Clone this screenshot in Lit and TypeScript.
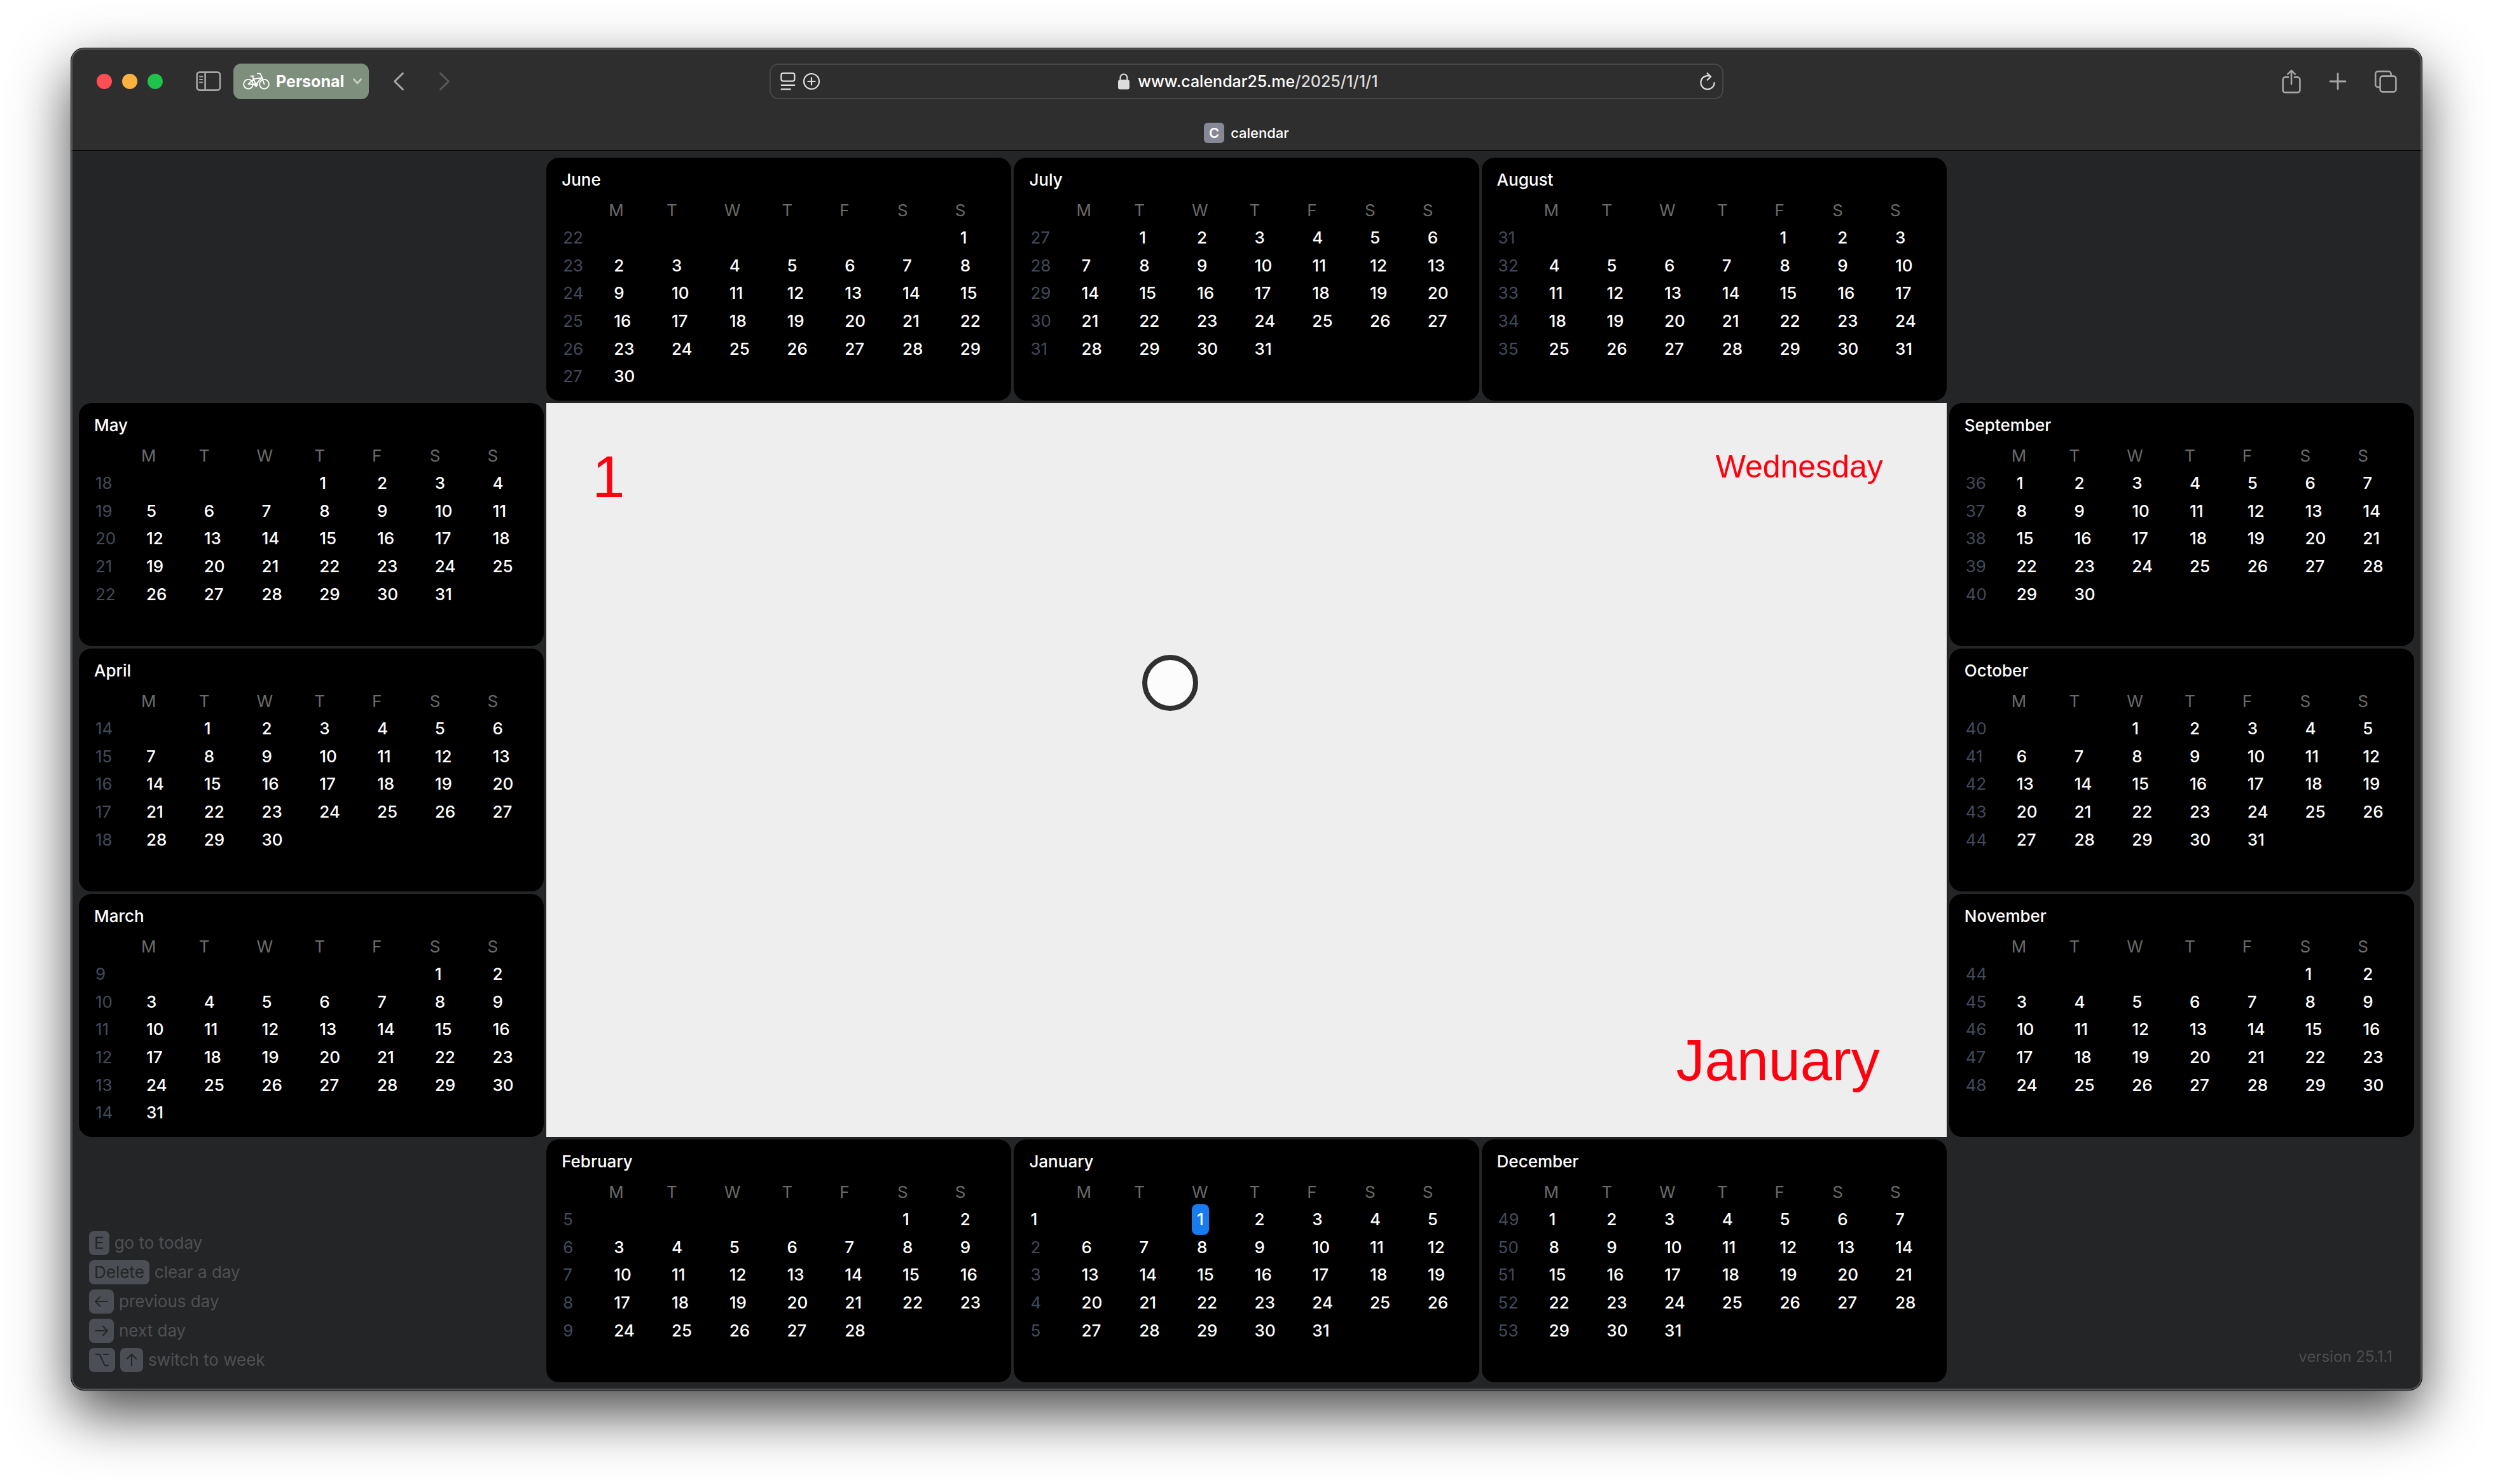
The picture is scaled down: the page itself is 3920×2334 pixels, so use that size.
import { LitElement, html, css, svg, nothing } from "lit";
import { customElement, property } from "lit/decorators.js";
import { classMap } from "lit/directives/class-map.js";

const YEAR = 2025;
const MONTHS = [
  "January", "February", "March", "April", "May", "June",
  "July", "August", "September", "October", "November", "December",
];
const WEEKDAYS = ["Monday", "Tuesday", "Wednesday", "Thursday", "Friday", "Saturday", "Sunday"];
const DAY_MS = 86400000;

interface Week {
  number: number;
  days: (number | null)[];
}

/** Monday-first weeks of a month; week numbers count on from 1 through the year. */
function weeksOf(month: number): Week[] {
  const first = new Date(Date.UTC(YEAR, month, 1));
  const yearStart = new Date(Date.UTC(YEAR, 0, 1));
  const lead = (first.getUTCDay() + 6) % 7;
  const yearLead = (yearStart.getUTCDay() + 6) % 7;
  const offset = Math.round((first.getTime() - yearStart.getTime()) / DAY_MS);
  const length = new Date(Date.UTC(YEAR, month + 1, 0)).getUTCDate();
  const startWeek = Math.floor((offset + yearLead) / 7) + 1;
  const rows = Math.ceil((lead + length) / 7);
  return Array.from({ length: rows }, (_, r) => ({
    number: startWeek + r,
    days: Array.from({ length: 7 }, (_, c) => {
      const d = r * 7 + c - lead + 1;
      return d >= 1 && d <= length ? d : null;
    }),
  }));
}

@customElement("month-card")
export class MonthCard extends LitElement {
  @property({ type: Number }) month = 0;
  @property({ type: Number }) selected = 0;

  static styles = css`
    :host {
      display: block;
      min-width: 0;
      background: #000;
      border-radius: 20px;
      color: #fff;
      font-size: 26px;
      line-height: 32px;
      font-weight: 500;
    }
    .month {
      display: block;
      padding: 19px 0 0 24px;
    }
    .title {
      display: block;
      text-align: left;
    }
    thead, tbody, tr {
      display: grid;
    }
    tr {
      grid-template-columns: 74px repeat(7, 1fr);
      grid-template-rows: minmax(0, 1fr);
      align-items: center;
      margin-right: -2px;
    }
    thead tr {
      height: 42px;
      margin-top: 11px;
    }
    tbody {
      height: 262px;
      grid-template-rows: repeat(6, minmax(0, 1fr));
    }
    th, td {
      padding: 0;
      text-align: left;
      height: 48px;
      line-height: 48px;
    }
    .weekday {
      color: #6a6a6a;
      font-weight: 400;
    }
    .week {
      padding-left: 2px;
      color: #414b5c;
      font-weight: 400;
    }
    .week.current {
      color: #fff;
      font-weight: 500;
    }
    .day {
      display: block;
      margin: 0;
      padding: 0 8px;
      height: 48px;
      border: 0;
      border-radius: 8px;
      background: transparent;
      color: inherit;
      font: inherit;
      line-height: 48px;
    }
    .day.selected {
      background: #187bf0;
    }
  `;

  render() {
    return html`
      <table class="month">
        <caption class="title">${MONTHS[this.month]}</caption>
        <thead>
          <tr>
            <td></td>
            ${WEEKDAYS.map((d) => html`<th class="weekday" scope="col" abbr=${d}>${d[0]}</th>`)}
          </tr>
        </thead>
        <tbody>
          ${weeksOf(this.month).map((w) => html`
            <tr>
              <th scope="row" class=${classMap({ week: true, current: this.selected > 0 && w.days.includes(this.selected) })}>${w.number}</th>
              ${w.days.map((d) => html`<td>${d === null ? nothing : html`
                <button type="button" class=${classMap({ day: true, selected: d === this.selected })}>${d}</button>`}</td>`)}
            </tr>`)}
        </tbody>
      </table>`;
  }
}

const icons = {
  sidebar: svg`<svg width="40" height="32" viewBox="0 0 40 32" fill="none" stroke="currentColor" stroke-width="2.6" stroke-linecap="round">
    <rect x="1.6" y="1.6" width="36.4" height="28" rx="4"/><path d="M14.6 2v27.4"/><path d="M6 8.4h4.2M6 13h4.2M6 17.6h4.2" stroke-width="2"/></svg>`,
  bike: svg`<svg width="42" height="28" viewBox="0 0 42 28" fill="none" stroke="currentColor" stroke-width="1.9" stroke-linecap="round" stroke-linejoin="round">
    <circle cx="8.5" cy="18.3" r="7.4"/><circle cx="33.5" cy="18.3" r="7.4"/>
    <path d="M12 5.6h5.4M14.8 5.8 20.4 19M23 1.8h3.4c1.2 0 1.4.6 1.8 1.8L33.5 18.3M17 10.4 28.8 8.4 20.4 19 8.5 18.3 17 10.4M28.8 8.4 30 7"/>
    <circle cx="20.6" cy="19" r="2"/><path d="M20.6 20.6v1.6"/></svg>`,
  chevronDown: svg`<svg width="16" height="12" viewBox="0 0 16 12" fill="none" stroke="currentColor" stroke-width="2.8" stroke-linecap="round" stroke-linejoin="round"><path d="M2.4 2.6 8 9l5.6-6.4"/></svg>`,
  back: svg`<svg width="20" height="32" viewBox="0 0 20 32" fill="none" stroke="currentColor" stroke-width="3" stroke-linecap="round" stroke-linejoin="round"><path d="M16.4 3.4 3.6 16l12.8 12.6"/></svg>`,
  forward: svg`<svg width="20" height="32" viewBox="0 0 20 32" fill="none" stroke="currentColor" stroke-width="3" stroke-linecap="round" stroke-linejoin="round"><path d="M3.6 3.4 16.4 16 3.6 28.6"/></svg>`,
  reader: svg`<svg width="24" height="30" viewBox="0 0 24 30" fill="none" stroke="currentColor" stroke-width="2.2" stroke-linecap="round">
    <rect x="1.4" y="2" width="21" height="12.6" rx="3"/><path d="M1.6 20.8h20.8M1.6 27.4h14.2"/></svg>`,
  plusCircle: svg`<svg width="28" height="28" viewBox="0 0 28 28" fill="none" stroke="currentColor" stroke-width="2.2" stroke-linecap="round"><circle cx="14" cy="14" r="12"/><path d="M14 8.4v11.2M8.4 14h11.2"/></svg>`,
  lock: svg`<svg width="18" height="26" viewBox="0 0 18 26"><rect y="10.4" width="18" height="15" rx="3" fill="currentColor"/><path d="M3.6 11V7a5.4 5.4 0 0 1 10.8 0v4" fill="none" stroke="currentColor" stroke-width="2.2"/></svg>`,
  reload: svg`<svg width="26" height="30" viewBox="0 0 26 30" fill="none" stroke="currentColor" stroke-width="2.2" stroke-linecap="round" stroke-linejoin="round"><path d="M17.6 7.3A10.6 10.6 0 1 0 23.6 17"/><path d="M12.6 2.2 18 7.6l-5.4 5.2"/></svg>`,
  share: svg`<svg width="32" height="40" viewBox="0 0 32 40" fill="none" stroke="currentColor" stroke-width="2.6" stroke-linecap="round" stroke-linejoin="round">
    <path d="M11 13.4H6.600a4 4 0 0 0-4 4v16a4 4 0 0 0 4 4h18.800a4 4 0 0 0 4-4v-16a4 4 0 0 0-4-4H21"/><path d="M16 24.4V3M10.2 8.6 16 2.8l5.8 5.8"/></svg>`,
  plus: svg`<svg width="28" height="28" viewBox="0 0 28 28" fill="none" stroke="currentColor" stroke-width="2.8" stroke-linecap="round"><path d="M14 2v24M2 14h24"/></svg>`,
  tabs: svg`<svg width="36" height="36" viewBox="0 0 36 36" fill="none" stroke="currentColor" stroke-width="2.6" stroke-linejoin="round">
    <rect x="9.6" y="9.6" width="24.8" height="24.8" rx="4"/><path d="M9.4 27H6.200a4 4 0 0 1-4-4V6.200a4 4 0 0 1 4-4H22.600a4 4 0 0 1 4 4v3"/></svg>`,
};

const keyGlyphs = {
  left: svg`<svg width="23" height="18" viewBox="0 0 23 18" fill="none" stroke="currentColor" stroke-width="2" stroke-linecap="round" stroke-linejoin="round"><path d="M20.600 9H2.600M9 2 2.200 9 9 16"/></svg>`,
  right: svg`<svg width="23" height="18" viewBox="0 0 23 18" fill="none" stroke="currentColor" stroke-width="2" stroke-linecap="round" stroke-linejoin="round"><path d="M2.200 9h18M14 2l6.800 7-6.800 7"/></svg>`,
  up: svg`<svg width="20" height="22" viewBox="0 0 20 22" fill="none" stroke="currentColor" stroke-width="2" stroke-linecap="round" stroke-linejoin="round"><path d="M10 20V2M3 9l7-7 7 7"/></svg>`,
  option: svg`<svg width="25" height="22" viewBox="0 0 25 22" fill="none" stroke="currentColor" stroke-width="2" stroke-linecap="round" stroke-linejoin="round"><path d="M3 2h5.600l8 17.400H22M15 2h7"/></svg>`,
};

const HINTS = [
  { keys: ["E"], label: "go to today" },
  { keys: ["Delete"], label: "clear a day" },
  { keys: [keyGlyphs.left], label: "previous day" },
  { keys: [keyGlyphs.right], label: "next day" },
  { keys: [keyGlyphs.option, keyGlyphs.up], label: "switch to week" },
];

@customElement("app-root")
export class AppRoot extends LitElement {
  @property({ type: Number }) month = 0;
  @property({ type: Number }) day = 1;

  static styles = css`
    :host {
      display: block;
      box-sizing: border-box;
      min-height: 100vh;
      padding: 76px 112px 148px;
      background: #fff;
      font-family: Inter, "Liberation Sans", sans-serif;
    }
    * {
      box-sizing: border-box;
    }
    button {
      margin: 0;
      padding: 0;
      border: 0;
      background: none;
      color: inherit;
      font: inherit;
    }
    svg {
      display: block;
    }
    .window {
      position: relative;
      display: flex;
      flex-direction: column;
      min-height: calc(100vh - 224px);
      border-radius: 20px;
      background: #242527;
      box-shadow: 0 0 0 1px #000, 0 36px 90px rgba(0, 0, 0, 0.72);
    }
    .window::after {
      content: "";
      position: absolute;
      inset: 0;
      border: 2px solid rgba(255, 255, 255, 0.22);
      border-radius: 20px;
      pointer-events: none;
    }
    .chrome {
      position: relative;
      border-radius: 20px 20px 0 0;
      background: #2e2e2e;
      box-shadow: 0 1px 0 #000;
      color: #a6a6a6;
    }
    .toolbar {
      display: grid;
      grid-template-columns: 1fr minmax(0, 1500px) 1fr;
      align-items: center;
      height: 104px;
    }
    .tools {
      display: flex;
      align-items: center;
    }
    .left {
      padding-left: 40px;
    }
    .right {
      justify-content: flex-end;
      gap: 43px;
      padding-right: 39px;
    }
    .lights {
      display: flex;
      gap: 16px;
      margin-right: 52px;
    }
    .light {
      width: 24px;
      height: 24px;
      border-radius: 50%;
    }
    .close { background: #ff4f52; }
    .minimise { background: #ffb13d; }
    .zoom { background: #1ec34b; }
    .profile {
      display: flex;
      align-items: center;
      height: 56px;
      margin: 0 37px 0 19px;
      padding: 0 10px 0 15px;
      border-radius: 12px;
      background: #7f8f7d;
      color: #fff;
      font-size: 25px;
      font-weight: 700;
    }
    .profile .name {
      margin: 0 13px 0 10px;
    }
    .profile .caret {
      color: #c6cdc5;
    }
    .forward {
      margin-left: 52px;
      color: #585858;
    }
    .address {
      display: grid;
      grid-template-columns: 1fr auto 1fr;
      align-items: center;
      height: 56px;
      padding: 0 10px 0 15px;
      border: 2px solid #474747;
      border-radius: 14px;
      color: #e0e0e0;
    }
    .page-tools {
      display: flex;
      align-items: center;
      gap: 11px;
    }
    .url {
      display: flex;
      align-items: center;
      gap: 13px;
      color: #dcdcdc;
      font-size: 25px;
      font-weight: 500;
      line-height: 32px;
      text-decoration: none;
    }
    .host {
      color: #fff;
    }
    .reload {
      justify-self: end;
    }
    .tab {
      display: flex;
      align-items: center;
      justify-content: center;
      gap: 10px;
      height: 56px;
      width: 100%;
      padding-top: 2px;
      color: #fff;
      font-size: 22px;
      font-weight: 500;
    }
    .favicon {
      width: 32px;
      height: 32px;
      border-radius: 6px;
      background: #868896;
      font-weight: 600;
      line-height: 32px;
      text-align: center;
    }
    .year {
      flex: 1;
      display: grid;
      grid-template-columns: repeat(5, minmax(0, 1fr));
      grid-template-rows: repeat(5, minmax(382px, 1fr));
      grid-template-areas:
        "nw jun jul aug ne"
        "may day day day sep"
        "apr day day day oct"
        "mar day day day nov"
        "sw feb jan dec se";
      gap: 4px;
      padding: 12px;
    }
    .m0 { grid-area: jan; }
    .m1 { grid-area: feb; }
    .m2 { grid-area: mar; }
    .m3 { grid-area: apr; }
    .m4 { grid-area: may; }
    .m5 { grid-area: jun; }
    .m6 { grid-area: jul; }
    .m7 { grid-area: aug; }
    .m8 { grid-area: sep; }
    .m9 { grid-area: oct; }
    .m10 { grid-area: nov; }
    .m11 { grid-area: dec; }
    .today {
      grid-area: day;
      position: relative;
      display: grid;
      grid-template-columns: 1fr auto;
      grid-template-rows: auto 1fr auto;
      padding: 64px 100px 68px 72px;
      background: #eee;
      color: #ff000f;
      font-family: "Liberation Sans", Arial, sans-serif;
    }
    .date {
      margin: 0;
      font-size: 92px;
      line-height: 104px;
      font-weight: 400;
    }
    .weekday {
      margin: 0;
      font-size: 50px;
      line-height: 72px;
      text-align: right;
    }
    .month-name {
      grid-column: 1 / -1;
      grid-row: 3;
      margin: 0;
      padding-right: 5px;
      font-size: 90px;
      line-height: 104px;
      text-align: right;
    }
    .pointer {
      position: absolute;
      left: 937px;
      top: 396px;
      width: 88px;
      height: 88px;
      border: 8px solid #303030;
      border-radius: 50%;
      background: #fcfcfc;
    }
    .hints {
      grid-area: sw;
      align-self: end;
      display: flex;
      flex-direction: column;
      gap: 8px;
      margin: 0;
      padding: 0 0 16px 16px;
      list-style: none;
      color: #505154;
      font-size: 26px;
      line-height: 38px;
    }
    .hint {
      display: flex;
      gap: 8px;
    }
    kbd {
      display: flex;
      align-items: center;
      height: 38px;
      padding: 0 8px;
      border-radius: 8px;
      background: #4b4e54;
      color: #242527;
      font: inherit;
    }
    .version {
      grid-area: se;
      align-self: end;
      margin: 0;
      padding: 0 34px 20px 0;
      color: #4d4e51;
      font-size: 24px;
      line-height: 40px;
      text-align: right;
    }
  `;

  render() {
    const weekday = WEEKDAYS[(new Date(Date.UTC(YEAR, this.month, this.day)).getUTCDay() + 6) % 7];
    return html`
      <div class="window">
        <header class="chrome">
          <div class="toolbar">
            <div class="tools left">
              <div class="lights">
                <button class="light close" aria-label="Close"></button>
                <button class="light minimise" aria-label="Minimise"></button>
                <button class="light zoom" aria-label="Zoom"></button>
              </div>
              <button aria-label="Show sidebar">${icons.sidebar}</button>
              <button class="profile">
                ${icons.bike}<span class="name">Personal</span><span class="caret">${icons.chevronDown}</span>
              </button>
              <button aria-label="Back">${icons.back}</button>
              <button class="forward" aria-label="Forward">${icons.forward}</button>
            </div>
            <div class="address">
              <div class="page-tools">
                <button aria-label="Page menu">${icons.reader}</button>
                <button aria-label="Add page">${icons.plusCircle}</button>
              </div>
              <a class="url" href="#">${icons.lock}<span><span class="host">www.calendar25.me</span>/2025/1/1/1</span></a>
              <button class="reload" aria-label="Reload">${icons.reload}</button>
            </div>
            <div class="tools right">
              <button aria-label="Share">${icons.share}</button>
              <button aria-label="New tab">${icons.plus}</button>
              <button aria-label="Show all tabs">${icons.tabs}</button>
            </div>
          </div>
          <button class="tab"><span class="favicon">C</span><span>calendar</span></button>
        </header>
        <main class="year">
          ${MONTHS.map((_, i) => html`
            <month-card class="m${i}" .month=${i} .selected=${i === this.month ? this.day : 0}></month-card>`)}
          <section class="today">
            <h1 class="date">${this.day}</h1>
            <p class="weekday">${weekday}</p>
            <p class="month-name">${MONTHS[this.month]}</p>
            <div class="pointer"></div>
          </section>
          <ul class="hints">
            ${HINTS.map((h) => html`
              <li class="hint">${h.keys.map((k) => html`<kbd>${k}</kbd>`)}<span>${h.label}</span></li>`)}
          </ul>
          <p class="version">version 25.1.1</p>
        </main>
      </div>`;
  }
}
